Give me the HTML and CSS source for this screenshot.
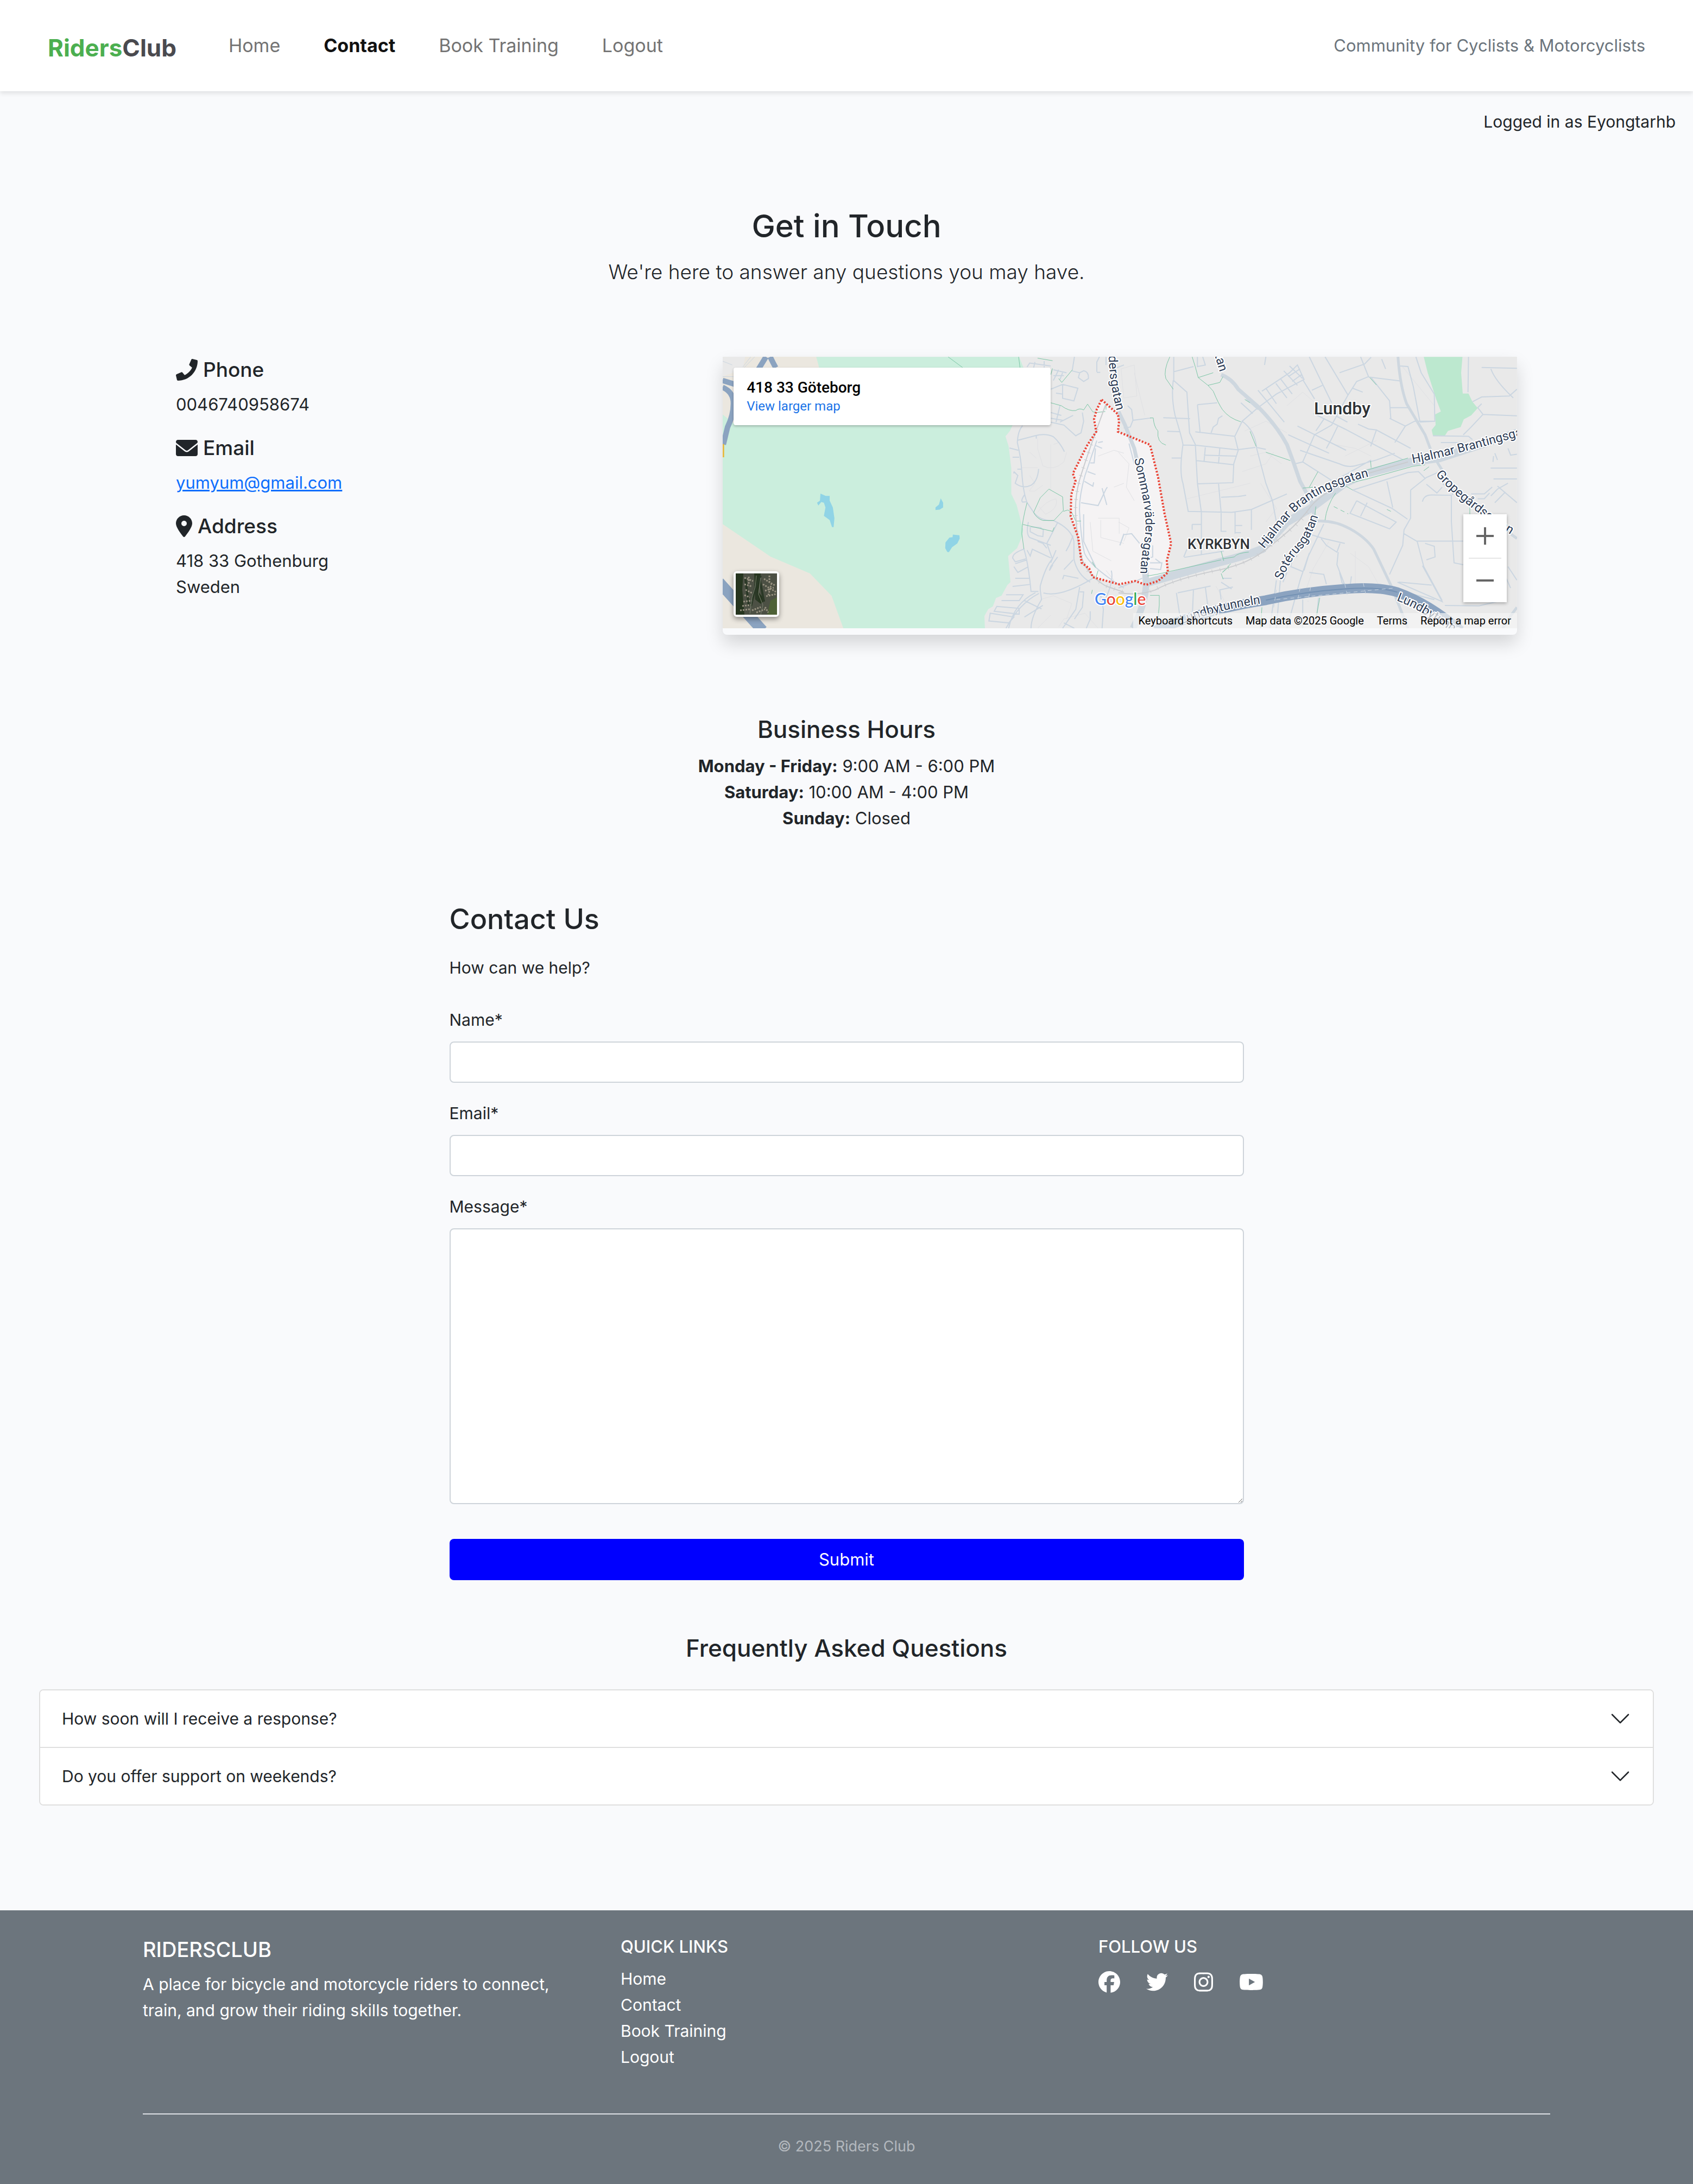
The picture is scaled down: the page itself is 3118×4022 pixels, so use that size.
FILE: index.html
```html
<!DOCTYPE html>
<html lang="en">
<head>
<meta charset="utf-8">
<meta name="viewport" content="width=device-width, initial-scale=1">
<title>Riders Club - Contact</title>
<link rel="stylesheet" href="styles.css">
</head>
<body>
<header class="navbar">
  <a class="brand" href="#"><span class="brand-accent">Riders</span>Club</a>
  <nav class="nav-links">
    <a class="nav-link" href="#">Home</a>
    <a class="nav-link active" href="#" aria-current="page">Contact</a>
    <a class="nav-link" href="#">Book Training</a>
    <a class="nav-link" href="#">Logout</a>
  </nav>
  <span class="tagline">Community for Cyclists &amp; Motorcyclists</span>
</header>

<main>
  <p class="user-status">Logged in as Eyongtarhb</p>

  <section class="intro">
    <h1>Get in Touch</h1>
    <p class="lead">We're here to answer any questions you may have.</p>
  </section>

  <section class="contact-row">
    <div class="contact-info">
      <h2 class="info-title"><svg class="icon icon-square" viewBox="0 0 512 512" aria-hidden="true"><path d="M493.4 24.6l-104-24c-11.3-2.6-22.9 3.3-27.5 13.9l-48 112c-4.2 9.8-1.4 21.3 6.9 28l60.6 49.6c-36 76.7-98.9 140.5-177.2 177.2l-49.6-60.6c-6.8-8.3-18.2-11.1-28-6.9l-112 48C3.9 366.5-2 378.1.6 389.4l24 104C27.1 504.2 36.7 512 48 512c256.1 0 464-207.5 464-464 0-11.2-7.7-20.9-18.6-23.4z"/></svg>Phone</h2>
      <p class="info-text">0046740958674</p>
      <h2 class="info-title"><svg class="icon icon-square" viewBox="0 0 512 512" aria-hidden="true"><path d="M256 352c-16.53 0-33.06-5.422-47.16-16.41L0 173.2V400C0 426.5 21.49 448 48 448h416c26.51 0 48-21.49 48-48V173.2l-208.8 162.5C289.1 346.6 272.5 352 256 352zM16.29 145.3l212.2 165.1c16.19 12.6 38.87 12.6 55.06 0l212.2-165.1C505.1 137.3 512 125 512 112C512 85.49 490.5 64 464 64h-416C21.49 64 0 85.49 0 112C0 125 6.01 137.3 16.29 145.3z"/></svg>Email</h2>
      <p class="info-text"><a href="mailto:yumyum@gmail.com">yumyum@gmail.com</a></p>
      <h2 class="info-title"><svg class="icon icon-pin" viewBox="0 0 384 512" aria-hidden="true"><path d="M215.7 499.2C267 435 384 279.4 384 192C384 86 298 0 192 0S0 86 0 192c0 87.4 117 243 168.3 307.2c12.3 15.3 35.1 15.3 47.4 0zM192 128a64 64 0 1 1 0 128 64 64 0 1 1 0-128z"/></svg>Address</h2>
      <p class="info-text">418 33 Gothenburg<br>Sweden</p>
    </div>

    <div class="map-card">
      <div class="map">
        <svg class="map-canvas" viewBox="0 0 1463 500" preserveAspectRatio="xMidYMid slice" role="img" aria-label="Map of 418 33 Göteborg">
          <rect width="1463" height="500" fill="#e9e9e9"/>
          <path d="M698 79L708 88 728 106 730 119 728 138 787 162 802 222 814 290 826 344 818 376 820 397 802 413 780 420 760 413 730 419 682 406 675 390 661 379 655 333 641 294 642 254 650 229 645 215 672 162 688 138 684 115 689 97Z" fill="#f5f3f4"/>

          <g class="left" transform="translate(-21 -17) scale(.4847 .3571)">
            <path fill="#ebe7df" d="M130 40H420V400H43V150L120 110ZM43 900H520V1460H43Z"/>
            <path fill="#cbeedd" d="M399 48L410 104V300L85 390 43 345V910L225 1078 375 1165 457 1280 502 1448H1040L1038 1385 1052 1350 1070 1335 1082 1292 1103 1280 1125 1225 1137 1210 1128 1075 1162 1035 1182 970 1185 940 1160 810 1140 755V620L1130 510 1118 458 1135 430 1145 400 1180 300 1186 103 1170 48Z"/>
            <path fill="#90d4e6" d="M415 753L435 765 450 765V790L462 825 468 880 465 926H459L450 890 428 868 434 825 428 800 418 797 407 815 402 800 413 790ZM872 778L881 800V825L868 836 852 838V825L865 810ZM918 965L943 968 944 985 935 1010 915 1030 903 1055 897 1054 889 1035 890 1005 905 980 917 978Z"/>
            <path class="rd thin" d="M43 70L80 90M43 150H90M165 48L125 104M150 48L120 100"/>
            <path class="mw" d="M208 48L180 110M224 48Q235 80 245 104M43 170L90 190M43 205Q85 230 84 290 84 350 62 410L46 500"/>
            <path class="mw wide" d="M30 1210L195 1460"/>
            <path d="M45 498V566" fill="none" stroke="#e8b93c" stroke-width="4" vector-effect="non-scaling-stroke"/>
            <path class="rd thin pale" d="M1240 470V520L1260 610Q1300 640 1340 590L1350 540M1290 500V740M1300 500L1320 490M1210 540L1235 570M1180 620H1240M1210 660L1230 700 1208 740H1230L1260 710M1240 850Q1270 790 1310 780 1320 830 1270 860L1245 820M1250 1300L1300 1280 1370 1320 1350 1400M1240 1448L1290 1380M1470 560L1530 530 1568 545M1530 720L1568 700M1440 900L1450 1050 1520 1100M1480 890V980L1568 1010M1470 880H1550V960M1500 1150L1530 1200M1320 1440L1340 1400 1420 1370 1470 1448"/>
            <path class="rd" d="M1183 403Q1165 430 1163 490 1176 560 1180 640 1184 740 1200 800L1225 850Q1250 895 1300 892 1370 935 1378 1000V1090Q1390 1170 1440 1210M1165 478L1230 455Q1270 440 1300 460 1325 490 1342 537M1235 455V470M1133 518L1167 530M1145 566H1170M1150 640L1165 660 1155 700Q1185 730 1215 710 1240 690 1244 626M1163 627H1178M1190 760Q1175 790 1183 797L1200 795M1187 1035Q1205 1110 1215 1258H1243M1250 1250V1230Q1270 1130 1296 1090L1275 1010 1315 905M1150 640V650M1205 900Q1195 960 1210 980L1290 1020M1212 925V950L1240 970 1260 975 1262 940 1248 930M1215 925L1255 930M1240 1000L1260 1010 1275 1035M1375 970L1360 1020 1348 1050M1316 1080L1290 1130 1285 1150 1298 1120M1310 1045L1290 1110M1187 1040Q1145 1060 1145 1085L1155 1105 1195 1090M1200 1045L1212 1075 1220 1040 1290 1085M1155 1115L1200 1095M1150 1130L1165 1160 1205 1130M1155 1190H1210M1145 1232L1210 1222M1120 1275H1185L1170 1305H1103M1085 1335L1170 1345V1375L1075 1360ZM1060 1370L1150 1390 1130 1420 1055 1410ZM1245 1268Q1170 1320 1120 1448M1232 1264Q1150 1320 1130 1448M1190 1305L1255 1348M1190 1390L1260 1330M1215 1448Q1215 1390 1255 1300L1250 1250M1262 1266Q1330 1290 1450 1190M1400 1235L1385 1350 1335 1448M1400 1260H1415L1410 1340 1380 1400M1340 1420L1380 1448M1340 1145L1375 1095M1335 1195L1340 1175 1395 1190M1425 1448L1440 1400V1360M1485 1448L1490 1350 1480 1280M1520 1150Q1530 1200 1500 1290M1200 100L1210 80 1290 95M1225 104L1230 75M1265 104V70M1300 115L1350 130M1300 145H1340M1320 115L1300 170M1335 130L1325 165M1372 115L1380 48M1370 120L1400 130 1415 120Q1435 125 1433 160L1415 175 1395 155 1400 130M1335 190L1393 210 1378 275 1335 262V190M1310 235L1335 240M1290 215L1335 190M1290 335L1330 350M1325 300L1310 385M1290 365L1335 375M1410 335L1415 380 1405 440 1385 455 1340 400 1290 385M1325 385L1375 350M1465 125V75L1475 48M1478 128H1465M1465 480Q1440 580 1420 660 1395 780 1400 860 1405 980 1418 1060 1440 1130 1568 1240M1470 490L1488 485M1460 505L1485 520M1440 595H1455L1460 520M1430 640L1460 655M1418 690L1450 715 1453 695M1405 800L1470 815 1500 730 1505 720M1485 725L1503 812M1415 860V1000L1460 1130M1553 1020L1568 960M1500 48V90M1530 48V110L1568 90"/>
            <path class="tr" d="M900 48L955 103M1168 48L1173 103M1240 55L1297 68M1297 108L1290 140M1372 115L1332 180 1320 160M1290 285L1330 300Q1360 330 1385 325 1400 310 1415 322L1430 292 1450 332 1465 335 1497 330M1225 850L1250 775 1283 730 1335 770 1338 840 1302 892H1260Q1235 880 1225 850M1200 800Q1180 900 1180 960L1188 1038M1183 912L1297 948 1303 928M1338 845L1355 838 1370 850 1385 895H1405M1447 1105L1460 1135M1470 1150L1462 1185M1448 1250L1445 1270M1500 300V320"/>
            <path class="rail" d="M1500 290L1465 420Q1420 590 1400 680 1380 780 1385 870 1392 1000 1400 1050 1420 1170 1500 1230L1568 1262"/>
            <path class="rail dash" d="M1465 420Q1420 590 1400 680 1380 780 1385 870 1392 1000 1400 1050 1420 1170 1500 1230L1568 1262"/>
          </g>

          <g class="right" transform="translate(729 -17) scale(.4847 .3571)">
            <path fill="#bce8cf" d="M1160 48L1175 130 1207 265 1225 330 1203 345 1205 400 1190 425 1195 455H1240L1252 430 1300 410 1312 370 1340 350 1365 312 1345 280 1330 237H1308L1302 130 1307 48Z"/>
            <path class="rd thin pale" d="M10 110L60 90 70 250 20 260ZM60 130L100 350M0 540L40 600 30 720 60 790M0 900L40 930 20 1000M470 640L560 600 590 540M480 430L560 380 640 440M540 700L600 830 560 900M500 560L560 540 620 600M860 560L980 480M820 500L900 520 960 560M880 1060L950 1130 1000 1250M640 300L700 230 760 300M1230 560L1340 470M1080 100L1200 300M260 780L500 700M370 1230L400 1300 350 1370M800 1000L740 1140 700 1300M900 1050V1230"/>
            <path class="rd" d="M210 48V170L260 230 270 440 292 500 300 700 315 850V1070M210 125L285 98M300 48V98L330 90 320 48M208 170Q200 260 215 350 240 460 245 500 230 640 245 700L265 845 430 850 505 835 640 755M170 362L272 367M55 375L125 363M185 432L232 434M202 570H240M245 503L300 505 450 527 520 515M292 435L442 458 470 380 530 310M300 295L375 285M300 295L310 435M352 440L360 410 375 395 380 365 395 352M442 460L455 530 438 600 435 697 300 703M330 515L325 590M385 520L380 600M325 555L450 560M297 583L440 605M380 700L390 850V950M390 772L455 768 485 762M443 850V960M443 918H470M443 955H465M505 835V940M280 912H315M280 912V940M250 1082L400 1050M248 1080L260 1040M390 948H410M470 380Q520 430 525 520L560 700 585 790 600 900M525 515L560 525M530 310L600 240 705 165 680 90 650 130 545 225M465 285L510 340M485 265L530 320M530 220L630 385M560 210L600 290M598 185L640 260M615 160L660 240M628 120L680 195M650 95L700 160M700 165L745 265M645 150L690 110M660 175L695 140M725 48L810 285M785 48L872 245M840 130L935 85 960 50M920 48L950 150 905 175 870 250 810 400 745 450 700 590 815 690 870 650 960 580M735 220L775 195M890 210L928 230M950 152L1070 172M960 155L1030 275 1035 370M1030 310H1100M1030 365L1090 405 1125 380H1200M1090 405L1050 490M740 340L860 420 1080 578M680 405L865 530M645 450L800 545M690 530L840 600Q870 620 900 610L980 580 1050 545M700 590L670 600M780 370L750 430M830 355L870 385M835 400L810 470 790 520M910 395L950 420 980 425 1110 520M980 425L958 510M890 735L1100 645 1140 640 1165 675M890 735L1040 830 1098 885M1020 690L1042 825M905 790L880 855 1030 935 1055 900 905 790M945 800L920 870M1110 735V880L1085 940 1080 1020 1030 1170M1110 735L1170 670 1220 640M1155 795Q1160 760 1190 760L1265 762V900L1275 1110 1310 1120M1170 705L1210 750 1230 720M1230 700L1265 735 1270 760M1085 960L1135 1000 1160 1130M1135 998H1310M1165 1010L1200 1025 1203 1080 1170 1095M1065 1210L1190 1225M1060 1210L1230 1310 1155 1125M1230 1305L1160 1130M1040 1245L1200 1300M1070 95L1100 98 1120 200 1145 380M1130 48L1150 130 1200 240 1202 380 1145 384M1380 103L1514 107M1330 48L1328 230M1345 280L1380 255 1485 250 1514 215M1385 345L1514 352M1380 290L1365 310 1385 345 1340 410 1310 450M1415 110Q1430 170 1500 260M1195 455L1330 458 1345 475M1225 490H1310M1414 622H1514M1425 678H1514M1340 755L1390 755 1420 720M1430 545L1440 580M1423 590L1425 560M1480 520L1490 555 1514 550M1440 715L1514 800M1415 765L1440 730 1480 700M1430 800L1470 745M1365 780H1390L1410 750M780 910L720 1080 690 1200 640 1448M720 960L780 985 860 1010M770 985L790 1020 830 1055 842 1010M725 1060L705 1150M680 1075L660 1090 655 1130 700 1155M640 1160L625 1210M835 1055L830 1120 860 1225M840 1160L850 1215 880 1230 885 1180M600 1200L575 1448M615 1200L600 1448M725 1160L780 1170 790 1220M760 1290L750 1448M700 1300V1448M225 1265L350 1230M220 1265L235 1400M285 1245L280 1400M330 1235L345 1390M395 1190H430M390 1210L430 1245M435 1235L385 1250 390 1300M0 1240Q60 1210 90 1190M120 1110H165L160 1145 120 1140M140 1090L160 1110M5 1020L20 965 50 960 80 1010M130 1020V1080L110 1090M40 495L60 600M560 48L555 90M1000 60L1015 110M1480 1130L1514 1200M1240 1330L1370 1332 1440 1310M1470 1180L1490 1240M35 300L50 320 55 375 45 410 20 415"/>
            <path class="road l" d="M1062 48Q1070 200 1095 290L1165 450 1190 540 1215 600 1290 760 1514 985M755 895Q820 890 880 935T970 1040L1040 1240 1100 1448M1514 1340Q1480 1400 1460 1448"/>
            <path class="road m" d="M390 140Q430 160 455 215L530 305Q600 400 640 500 665 590 690 690L735 800 748 895M0 330L25 400 60 520 80 640"/>
            <path class="road s" d="M100 1100L105 1225Q100 1330 55 1448"/>
            <path class="road xl" d="M105 1215L390 1105Q480 1075 545 1040L640 900 730 830 860 700 940 650 1110 590 1220 570 1514 440"/>
            <path class="rail" d="M0 1265Q80 1280 140 1250 220 1190 390 1145 500 1110 560 1040 680 920 730 820 780 740 920 660L1100 590"/>
            <path class="rail dash" d="M120 1258Q220 1190 390 1145 500 1110 560 1040 680 920 720 850"/>
            <path class="tr" d="M195 48Q170 120 180 160L208 215M280 48L292 100 303 155 360 130M303 155L340 195 385 180 397 150M340 195L360 225Q380 290 395 320 420 365 465 383M500 432L523 510M560 540L653 583M120 363H132Q135 410 150 430 145 490 180 503M758 640L725 720M110 1178L145 1170 390 1095M395 1090L440 1080Q450 1060 495 1055M390 1050L400 1100M390 1165L398 1195M395 1160L420 1130M955 155L980 193M958 585L960 620M900 650L1100 570M870 700L940 680 1120 612 1165 605M860 712L890 735M825 750Q790 820 785 890M1020 835L1035 845M120 1278H155V1330L150 1400M545 1340L540 1448M765 1290L750 1400M1335 810V860M480 268L500 285M700 725L740 720M750 820L745 880M1160 635L1180 615M0 315Q15 300 10 290"/>
            <path class="tr" stroke-dasharray="8 6" d="M818 820L873 858M395 1160L430 1110"/>
            <path class="mw tunnel" d="M140 1460Q240 1400 400 1345 480 1320 560 1303 700 1260 860 1245 980 1230 1060 1262 1180 1320 1300 1460"/>
            <path d="M560 1303Q700 1260 860 1245 980 1230 1060 1262" fill="none" stroke="#7492b4" stroke-width="2" vector-effect="non-scaling-stroke"/>
            <path class="rd thin" stroke-dasharray="7 6" d="M600 1250L590 1340M690 1240L680 1310M730 1235L720 1310M860 1220L870 1280M930 1215L940 1275M600 1300L1050 1240"/>
          </g>

          <path d="M698 79L708 88 728 106 730 119 728 138 787 162 802 222 814 290 826 344 818 376 820 397 802 413 780 420 760 413 730 419 682 406 675 390 661 379 655 333 641 294 642 254 650 229 645 215 672 162 688 138 684 115 689 97Z" fill="none" stroke="#ea4335" stroke-width="4" stroke-dasharray="3 3"/>

          <defs>
            <path id="st-north" d="M711 -2Q712 50 727 104"/>
            <path id="st-tan" d="M906 -3L920 42"/>
            <path id="st-sommar" d="M758 188C770 246 784 290 777 335S770 380 769 404"/>
            <path id="st-hjalmar" d="M997 354C1046 296 1058 254 1192 220"/>
            <path id="st-hjalmar-east" d="M1271 196Q1340 184 1540 126"/>
            <path id="st-grope" d="M1313 217Q1362 275 1480 345"/>
            <path id="st-soterus" d="M1030 412Q1048 368 1068 352 1086 330 1099 286"/>
            <path id="st-tunnel" d="M846 492Q920 462 1014 452"/>
            <path id="st-lundby" d="M1241 449Q1290 466 1390 540"/>
          </defs>
          <g class="street">
            <text><textPath href="#st-north">dersgatan</textPath></text>
            <text><textPath href="#st-tan">tan</textPath></text>
            <text><textPath href="#st-sommar">Sommarvädersgatan</textPath></text>
            <text><textPath href="#st-hjalmar">Hjalmar Brantingsgatan</textPath></text>
            <text><textPath href="#st-hjalmar-east">Hjalmar Brantingsgatan</textPath></text>
            <text><textPath href="#st-grope">Gropegårdsgatan</textPath></text>
            <text><textPath href="#st-soterus">Sotérusgatan</textPath></text>
            <text><textPath href="#st-tunnel">Lundbytunneln</textPath></text>
            <text><textPath href="#st-lundby">Lundbytunneln</textPath></text>
          </g>
          <text class="place big" x="1089" y="106">Lundby</text>
          <text class="place" x="856" y="354">KYRKBYN</text>
          <text class="glogo" x="685" y="457"><tspan fill="#4285f4">G</tspan><tspan fill="#ea4335">o</tspan><tspan fill="#fbbc05">o</tspan><tspan fill="#4285f4">g</tspan><tspan fill="#34a853">l</tspan><tspan fill="#ea4335">e</tspan></text>
        </svg>

        <div class="place-card">
          <strong>418 33 Göteborg</strong>
          <a href="#">View larger map</a>
        </div>

        <button class="satellite" type="button" aria-label="Show satellite imagery">
          <svg viewBox="0 0 76 76" aria-hidden="true">
            <rect width="76" height="76" fill="#4c5044"/>
            <path d="M0 0H14L12 30 16 76H0ZM34 0H46L42 34 54 50 46 56 36 48Z" fill="#26351f"/>
            <path d="M64 50L76 44V76H58Z" fill="#4d6136"/>
            <path d="M36 20L40 50M28 60L36 26 46 4M44 10L52 52M18 10L24 60" fill="none" stroke="#2a3826" stroke-width="4"/>
            <path d="M16 8L32 14M16 20L30 24M18 30L30 36M16 40L26 44M14 52L30 50M12 60L28 58M8 68L26 66M52 10L72 22M50 20L74 34M54 32L70 26M56 42L74 38M54 62L60 72M30 68L46 62M38 72L54 66M24 6V20M62 4V16M66 18L60 40" fill="none" stroke="#979180" stroke-width="3" stroke-dasharray="3 2"/>
            <path d="M38 4L36 24 30 44 26 74M46 8L42 38 50 58 46 76" fill="none" stroke="#7c8272" stroke-width="1"/>
          </svg>
        </button>

        <div class="zoom">
          <button type="button" aria-label="Zoom in"><svg viewBox="0 0 32 32" aria-hidden="true"><path d="M16 0V32M0 16H32"/></svg></button>
          <button type="button" aria-label="Zoom out"><svg viewBox="0 0 32 32" aria-hidden="true"><path d="M0 16H32"/></svg></button>
        </div>

        <div class="attribution">
          <button type="button">Keyboard shortcuts</button>
          <span>Map data ©2025 Google</span>
          <a href="#">Terms</a>
          <a href="#">Report a map error</a>
        </div>
      </div>
    </div>
  </section>

  <section class="hours">
    <h2 class="section-title">Business Hours</h2>
    <p><strong>Monday - Friday:</strong> 9:00 AM - 6:00 PM<br><strong>Saturday:</strong> 10:00 AM - 4:00 PM<br><strong>Sunday:</strong> Closed</p>
  </section>

  <form class="contact-form">
    <h2 class="form-title">Contact Us</h2>
    <p class="form-hint">How can we help?</p>
    <div class="field">
      <label for="name">Name*</label>
      <input class="control" id="name" type="text" required>
    </div>
    <div class="field">
      <label for="email">Email*</label>
      <input class="control" id="email" type="email" required>
    </div>
    <div class="field">
      <label for="message">Message*</label>
      <textarea class="control message" id="message" required></textarea>
    </div>
    <button class="submit" type="submit">Submit</button>
  </form>

  <section class="faq">
    <h2 class="section-title">Frequently Asked Questions</h2>
    <div class="accordion">
      <button class="accordion-button" type="button" aria-expanded="false">How soon will I receive a response?<svg class="chevron" viewBox="0 0 16 16" aria-hidden="true"><path d="M1.646 4.646a.5.5 0 0 1 .708 0L8 10.293l5.646-5.647a.5.5 0 0 1 .708.708l-6 6a.5.5 0 0 1-.708 0l-6-6a.5.5 0 0 1 0-.708z"/></svg></button>
      <button class="accordion-button" type="button" aria-expanded="false">Do you offer support on weekends?<svg class="chevron" viewBox="0 0 16 16" aria-hidden="true"><path d="M1.646 4.646a.5.5 0 0 1 .708 0L8 10.293l5.646-5.647a.5.5 0 0 1 .708.708l-6 6a.5.5 0 0 1-.708 0l-6-6a.5.5 0 0 1 0-.708z"/></svg></button>
    </div>
  </section>
</main>

<footer class="footer">
  <div class="footer-inner">
    <div class="footer-cols">
      <div class="footer-about">
        <h2 class="footer-brand">RIDERSCLUB</h2>
        <p>A place for bicycle and motorcycle riders to connect, train, and grow their riding skills together.</p>
      </div>
      <div>
        <h2 class="footer-title">QUICK LINKS</h2>
        <ul class="footer-links">
          <li><a href="#">Home</a></li>
          <li><a href="#">Contact</a></li>
          <li><a href="#">Book Training</a></li>
          <li><a href="#">Logout</a></li>
        </ul>
      </div>
      <div>
        <h2 class="footer-title">FOLLOW US</h2>
        <div class="social">
          <a href="#" aria-label="Facebook"><svg viewBox="0 0 512 512"><path d="M512 256C512 114.6 397.4 0 256 0S0 114.6 0 256C0 376 82.7 476.8 194.2 504.5V334.2H141.4V256h52.8V222.3c0-87.1 39.4-127.5 125-127.5c16.2 0 44.2 3.2 55.7 6.4V172c-6-.6-16.5-1-29.6-1c-42 0-58.2 15.9-58.2 57.2V256h83.6l-14.4 78.2H287V510.1C413.8 494.8 512 386.9 512 256z"/></svg></a>
          <a href="#" aria-label="Twitter"><svg viewBox="0 0 512 512"><path d="M459.37 151.716c.325 4.548.325 9.097.325 13.645 0 138.72-105.583 298.558-298.558 298.558-59.452 0-114.68-17.219-161.137-47.106 8.447.974 16.568 1.299 25.34 1.299 49.055 0 94.213-16.568 130.274-44.832-46.132-.975-84.792-31.188-98.112-72.772 6.498.974 12.995 1.624 19.818 1.624 9.421 0 18.843-1.3 27.614-3.573-48.081-9.747-84.143-51.98-84.143-102.985v-1.299c13.969 7.797 30.214 12.67 47.431 13.319-28.264-18.843-46.781-51.005-46.781-87.391 0-19.492 5.197-37.36 14.294-52.954 51.655 63.675 129.3 105.258 216.365 109.807-1.624-7.797-2.599-15.918-2.599-24.04 0-57.828 46.782-104.934 104.934-104.934 30.213 0 57.502 12.67 76.67 33.137 23.715-4.548 46.456-13.32 66.599-25.34-7.798 24.366-24.366 44.833-46.132 57.827 21.117-2.273 41.584-8.122 60.426-16.243-14.292 20.791-32.161 39.308-52.628 54.253z"/></svg></a>
          <a href="#" aria-label="Instagram"><svg viewBox="0 0 448 512"><path d="M224.1 141c-63.6 0-114.9 51.3-114.9 114.9s51.3 114.9 114.9 114.9S339 319.5 339 255.9 287.7 141 224.1 141zm0 189.6c-41.1 0-74.7-33.5-74.7-74.7s33.5-74.7 74.7-74.7 74.7 33.5 74.7 74.7-33.6 74.7-74.7 74.7zm146.4-194.3c0 14.9-12 26.8-26.8 26.8-14.9 0-26.8-12-26.8-26.8s12-26.8 26.8-26.8 26.8 12 26.8 26.8zm76.1 27.2c-1.7-35.9-9.9-67.7-36.2-93.9-26.2-26.2-58-34.4-93.9-36.2-37-2.1-147.9-2.1-184.9 0-35.8 1.7-67.6 9.9-93.9 36.1s-34.4 58-36.2 93.9c-2.1 37-2.1 147.9 0 184.9 1.7 35.9 9.9 67.7 36.2 93.9s58 34.4 93.9 36.2c37 2.1 147.9 2.1 184.9 0 35.9-1.7 67.7-9.9 93.9-36.2 26.2-26.2 34.4-58 36.2-93.9 2.1-37 2.1-147.8 0-184.8zM398.8 388c-7.8 19.6-22.9 34.7-42.6 42.6-29.5 11.7-99.5 9-132.1 9s-102.7 2.6-132.1-9c-19.6-7.8-34.7-22.9-42.6-42.6-11.7-29.5-9-99.5-9-132.1s-2.6-102.7 9-132.1c7.8-19.6 22.9-34.7 42.6-42.6 29.5-11.7 99.5-9 132.1-9s102.7-2.6 132.1 9c19.6 7.8 34.7 22.9 42.6 42.6 11.7 29.5 9 99.5 9 132.1s2.7 102.7-9 132.1z"/></svg></a>
          <a href="#" aria-label="YouTube"><svg viewBox="0 0 576 512"><path d="M549.655 124.083c-6.281-23.65-24.787-42.276-48.284-48.597C458.781 64 288 64 288 64S117.22 64 74.629 75.486c-23.497 6.322-42.003 24.947-48.284 48.597-11.412 42.867-11.412 132.305-11.412 132.305s0 89.438 11.412 132.305c6.281 23.65 24.787 41.5 48.284 47.821C117.22 448 288 448 288 448s170.78 0 213.371-11.486c23.497-6.321 42.003-24.171 48.284-47.821 11.412-42.867 11.412-132.305 11.412-132.305s0-89.438-11.412-132.305zm-317.51 213.508V175.185l142.739 81.205-142.739 81.201z"/></svg></a>
        </div>
      </div>
    </div>
    <p class="copyright">© 2025 Riders Club</p>
  </div>
</footer>
</body>
</html>
```
FILE: styles.css
```css
*, *::before, *::after { box-sizing: border-box; }

body {
  margin: 0;
  background: #f9fafc;
  color: #212529;
  font-family: Inter, "Liberation Sans", sans-serif;
  font-size: 30px;
  line-height: 48px;
}

h1, h2, p, ul { margin: 0; }
h1, h2 { font-weight: 500; }
button, input, textarea { font: inherit; color: inherit; }
svg { display: block; }

/* Navigation bar */
.navbar {
  display: flex;
  align-items: center;
  min-height: 168px;
  padding: 0 88px;
  background: #fff;
  box-shadow: 0 4px 8px rgba(0, 0, 0, .1);
}
.brand {
  padding-top: 8px;
  color: #4a4a4f;
  font-size: 44px;
  font-weight: 700;
  text-decoration: none;
}
.brand-accent { color: #4caf50; }
.nav-links {
  display: flex;
  gap: 80px;
  margin-left: 96px;
  font-size: 34px;
}
.nav-link { color: #737373; text-decoration: none; }
.nav-link.active { color: #111; font-weight: 700; }
.tagline {
  margin-left: auto;
  color: #6c757d;
  font-size: 31px;
}

.user-status { padding: 32px 32px 0; text-align: right; }

/* Intro */
.intro { padding-top: 130px; text-align: center; }
.intro h1 { font-size: 58px; line-height: 77px; margin-bottom: 16px; }
.lead { font-size: 37px; line-height: 60px; font-weight: 300; }

/* Contact details and map */
.contact-row {
  display: grid;
  grid-template-columns: 2fr 3fr;
  padding: 126px 300px 0;
}
.contact-info { padding: 0 24px; font-size: 31px; }
.info-title {
  display: flex;
  align-items: center;
  gap: 10px;
  margin-bottom: 16px;
  font-size: 37px;
}
.info-text { margin-bottom: 32px; }
.info-text a { color: #0d6efd; }
.icon { height: 40px; fill: currentColor; }
.icon-square { width: 40px; }
.icon-pin { width: 30px; }

.map-card {
  margin: 0 24px;
  padding-bottom: 12px;
  border-radius: 8px;
  background: #f9fafc;
  box-shadow: 0 16px 32px rgba(0, 0, 0, .15);
  align-self: start;
}
.map {
  position: relative;
  height: 500px;
  overflow: hidden;
  font-family: Roboto, "Liberation Sans", sans-serif;
}
.map-canvas { width: 100%; height: 100%; }
.left path, .right path { vector-effect: non-scaling-stroke; }
.rd, .road, .tr, .rail, .mw { fill: none; }
.rd { stroke: #cbd6e1; stroke-width: 2; }
.rd.thin { stroke-width: 1; }
.rd.pale { stroke: #e0e1e4; }
.road { stroke: #ced7df; }
.road.m { stroke-width: 7; }
.road.l { stroke-width: 5; }
.road.s { stroke-width: 12; }
.road.xl { stroke-width: 15; }
.tr { stroke: #7cc6a6; stroke-width: 1; }
.rail { stroke: #cacccf; stroke-width: 2; }
.rail.dash { stroke-width: 7; stroke-dasharray: 1 14; }
.mw { stroke: #8ba3c0; stroke-width: 10; }
.mw.wide { stroke-width: 20; }
.mw.tunnel { stroke-width: 18; }
.street {
  fill: #2c3b55;
  font-size: 23px;
  stroke: #fff;
  stroke-width: 4px;
  stroke-linejoin: round;
  paint-order: stroke;
}
.place {
  fill: #2e3236;
  font-size: 26px;
  font-weight: 500;
  stroke: #fff;
  stroke-width: 4px;
  stroke-linejoin: round;
  paint-order: stroke;
}
.place.big { font-size: 32px; }
.glogo {
  font-family: Lato, sans-serif;
  font-size: 30px;
  font-weight: 500;
  stroke: #fff;
  stroke-width: 4px;
  stroke-linejoin: round;
  paint-order: stroke;
}

.place-card {
  position: absolute;
  top: 20px;
  left: 20px;
  display: flex;
  flex-direction: column;
  width: 584px;
  height: 106px;
  padding: 19px 24px;
  border-radius: 4px;
  background: #fff;
  box-shadow: 0 2px 4px rgba(0, 0, 0, .25);
  color: #000;
  font-size: 24px;
  line-height: 35px;
}
.place-card strong { font-size: 28px; font-weight: 500; }
.place-card a { color: #1a73e8; text-decoration: none; }

.satellite {
  position: absolute;
  left: 20px;
  bottom: 21px;
  width: 84px;
  height: 84px;
  padding: 0;
  border: 4px solid #fff;
  border-radius: 6px;
  box-shadow: 0 4px 10px rgba(0, 0, 0, .4);
}

.zoom {
  position: absolute;
  right: 19px;
  bottom: 48px;
  width: 80px;
  background: #fff;
  box-shadow: 0 2px 6px rgba(0, 0, 0, .3);
}
.zoom button {
  display: grid;
  place-items: center;
  width: 60px;
  height: 80px;
  margin: 0 auto;
  padding: 0;
  border: 0;
  background: none;
}
.zoom button + button { height: 82px; border-top: 2px solid #e6e6e6; }
.zoom svg { width: 32px; height: 32px; stroke: #666; stroke-width: 4; }

.attribution {
  position: absolute;
  right: 0;
  bottom: 0;
  display: flex;
  gap: 24px;
  padding: 0 11px 0 10px;
  background: rgba(245, 245, 245, .7);
  color: #000;
  font-size: 20px;
  line-height: 28px;
}
.attribution a { color: inherit; text-decoration: none; }
.attribution button { padding: 0; border: 0; background: none; }

/* Business hours */
.section-title { font-size: 44px; line-height: 58px; }
.hours { padding-top: 145px; text-align: center; font-size: 31px; }
.hours .section-title { margin-bottom: 15px; }

/* Contact form */
.contact-form {
  max-width: 1463px;
  margin: 128px auto 0;
}
.form-title { font-size: 52px; line-height: 67px; margin-bottom: 32px; }
.form-hint { margin-bottom: 48px; }
.field { display: flex; flex-direction: column; gap: 16px; margin-bottom: 32px; }
.control {
  width: 100%;
  height: 76px;
  padding: 12px 24px;
  border: 2px solid #ced4da;
  border-radius: 8px;
  background: #fff;
}
.message { height: 508px; resize: vertical; }
.submit {
  width: 100%;
  height: 76px;
  margin-top: 32px;
  border: 0;
  border-radius: 8px;
  background: #00f;
  color: #fff;
  font-size: 31px;
}

/* FAQ */
.faq { padding: 96px 72px 0; }
.faq .section-title { margin-bottom: 47px; text-align: center; }
.accordion {
  overflow: hidden;
  border: 2px solid #dfdfdf;
  border-radius: 8px;
  background: #fff;
}
.accordion-button {
  display: flex;
  align-items: center;
  justify-content: space-between;
  width: 100%;
  height: 104px;
  padding: 0 40px;
  border: 0;
  background: #fff;
  text-align: left;
}
.accordion-button + .accordion-button { height: 106px; border-top: 2px solid #dfdfdf; }
.chevron { width: 40px; height: 40px; fill: #212529; }

/* Footer */
.footer {
  margin-top: 193px;
  padding: 48px 48px 48px;
  background: #6c757d;
  color: #fff;
}
.footer-inner { max-width: 2592px; margin: 0 auto; }
.footer-cols {
  display: grid;
  grid-template-columns: repeat(3, 1fr);
  gap: 48px;
  padding-bottom: 80px;
  border-bottom: 2px solid #dee2e6;
}
.footer-about { padding-right: 32px; }
.footer-brand { margin-bottom: 16px; font-size: 38px; }
.footer-title { margin-bottom: 16px; font-size: 31px; line-height: 38px; }
.footer-links { padding: 0; list-style: none; }
.footer-links a { color: #fff; text-decoration: none; }
.social { display: flex; align-items: center; gap: 48px; height: 60px; }
.social svg { height: 40px; fill: #fff; }
.copyright {
  margin-top: 38px;
  color: #b3b8bd;
  font-size: 27px;
  line-height: 42px;
  text-align: center;
}
```
